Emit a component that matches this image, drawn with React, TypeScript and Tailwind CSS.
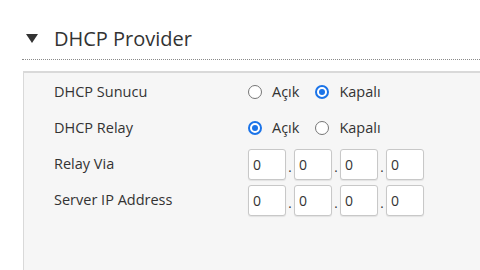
const font = { fontFamily: '"Open Sans", "Noto Sans", sans-serif' };

const Radio = ({ checked, label }: { checked: boolean; label: string }) => (
  <label className="flex items-center gap-[10px] text-[14.5px] text-[#333]">
    <span
      className={
        checked
          ? "flex h-[14px] w-[14px] items-center justify-center rounded-full border-2 border-[#1a73e8] bg-white"
          : "h-[14px] w-[14px] rounded-full border border-[#767676] bg-white"
      }
    >
      {checked && <span className="h-[6px] w-[6px] rounded-full bg-[#1a73e8]" />}
    </span>
    {label}
  </label>
);

const IpInput = () => (
  <div className="flex items-end">
    {[0, 1, 2, 3].map((i) => (
      <div key={i} className="flex items-end">
        {i > 0 && <span className="w-[8px] pb-[6px] text-center text-[13px] leading-none text-[#333]">.</span>}
        <input
          defaultValue="0"
          className="h-[31px] w-[38px] rounded-[3px] border border-[#c8c8c8] bg-white px-[4px] text-[14px] text-[#333] shadow-[0_1px_1px_rgba(0,0,0,0.08)] outline-none"
        />
      </div>
    ))}
  </div>
);

const Row = ({ label, children }: { label: string; children: React.ReactNode }) => (
  <div className="flex h-[36px] items-center">
    <div className="w-[194px] text-[14.5px] text-[#333]">{label}</div>
    {children}
  </div>
);

export default function App() {
  return (
    <div className="flex h-[270px] w-[480px] flex-col overflow-hidden bg-white" style={font}>
      <div className="flex items-center pl-[26px] pt-[25px]">
        <span className="h-0 w-0 border-x-[6px] border-t-[9px] border-x-transparent border-t-[#333]" />
        <span className="ml-[16px] text-[20px] leading-[27px] text-[#333]">DHCP Provider</span>
      </div>
      <div className="ml-[22px] mt-[7px] border-t border-dotted border-[#8a8a8a]" />
      <div className="ml-[23px] mt-[11px] flex-1 border-l border-t-2 border-[#d9d9d9] bg-[#f6f6f6] pl-[30px] pt-[1px]">
        <Row label="DHCP Sunucu">
          <div className="flex items-center gap-[16px]">
            <Radio checked={false} label="Açık" />
            <Radio checked label="Kapalı" />
          </div>
        </Row>
        <Row label="DHCP Relay">
          <div className="flex items-center gap-[16px]">
            <Radio checked label="Açık" />
            <Radio checked={false} label="Kapalı" />
          </div>
        </Row>
        <Row label="Relay Via">
          <IpInput />
        </Row>
        <Row label="Server IP Address">
          <IpInput />
        </Row>
      </div>
    </div>
  );
}
